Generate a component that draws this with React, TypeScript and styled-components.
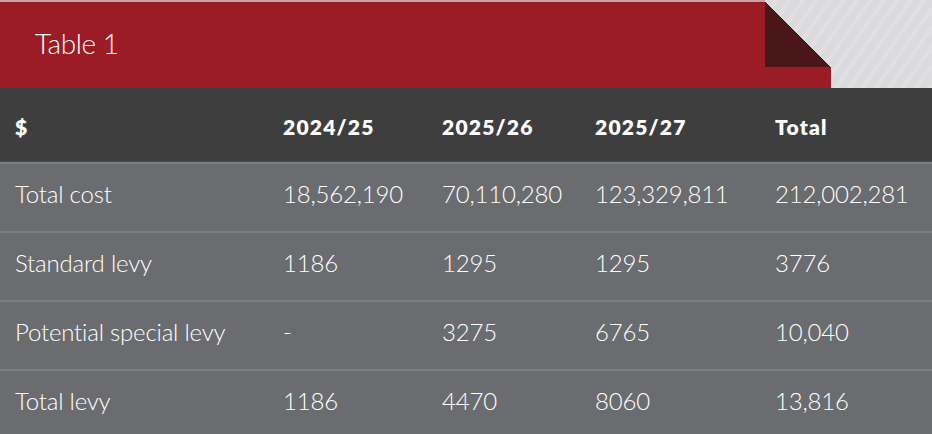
import styled, { createGlobalStyle } from 'styled-components'

const GlobalStyle = createGlobalStyle`
  html, body {
    margin: 0;
    padding: 0;
    background: #dcdcde;
  }
  body {
    font-family: 'Lato', 'Liberation Sans', sans-serif;
  }
`

const Page = styled.div`
  width: 932px;
  height: 434px;
  overflow: hidden;
  background: repeating-linear-gradient(
    125deg,
    #dbdbdd 0px,
    #dbdbdd 7px,
    #e0e0e2 7px,
    #e0e0e2 11px
  );
`

const Banner = styled.div`
  display: flex;
  height: 88px;
`

const Ribbon = styled.div`
  width: 765px;
  box-sizing: border-box;
  border-top: 2px solid #c9a3a6;
  background: #9b1c24;
  display: flex;
  align-items: center;
  padding: 0 0 4px 35px;
`

const Title = styled.h1`
  margin: 0;
  color: #fff;
  font-weight: 300;
  font-size: 28px;
  letter-spacing: -0.4px;
`

const Fold = styled.div`
  width: 66px;
  display: flex;
  flex-direction: column;
  padding-top: 2px;
`

const FoldFlap = styled.div`
  height: 65px;
  background: linear-gradient(to top right, #4a1718 50%, transparent 50%);
`

const FoldTail = styled.div`
  flex: 1;
  background: #9b1c24;
`

const Row = styled.div<{ $head?: boolean }>`
  display: grid;
  grid-template-columns: 268px 159px 153px 180px 1fr;
  align-items: center;
  padding-left: 15px;
  height: ${p => (p.$head ? '73px' : '67px')};
  background: ${p => (p.$head ? '#3e3e3e' : '#6b6c70')};
  color: #fff;
  & + & {
    border-top: 2px solid #7c7d81;
  }
`

const HeadRow = styled(Row)`
  border-bottom: 1px solid #55484b;
  & + & {
    border-top: none;
  }
`

const HeadCell = styled.div`
  font-weight: 800;
  font-size: 21px;
  letter-spacing: 1.2px;
  padding-top: 3px;
`

const Cell = styled.div`
  font-weight: 300;
  font-size: 24px;
  letter-spacing: -0.2px;
  padding-bottom: 9px;
`

const head = ['$', '2024/25', '2025/26', '2025/27', 'Total']

const rows = [
  ['Total cost', '18,562,190', '70,110,280', '123,329,811', '212,002,281'],
  ['Standard levy', '1186', '1295', '1295', '3776'],
  ['Potential special levy', '-', '3275', '6765', '10,040'],
  ['Total levy', '1186', '4470', '8060', '13,816'],
]

export default function App() {
  return (
    <>
      <GlobalStyle />
      <Page>
        <Banner>
          <Ribbon>
            <Title>Table 1</Title>
          </Ribbon>
          <Fold>
            <FoldFlap />
            <FoldTail />
          </Fold>
        </Banner>
        <HeadRow $head>
          {head.map(h => (
            <HeadCell key={h}>{h}</HeadCell>
          ))}
        </HeadRow>
        {rows.map(r => (
          <Row key={r[0]}>
            {r.map((c, i) => (
              <Cell key={i}>{c}</Cell>
            ))}
          </Row>
        ))}
      </Page>
    </>
  )
}
